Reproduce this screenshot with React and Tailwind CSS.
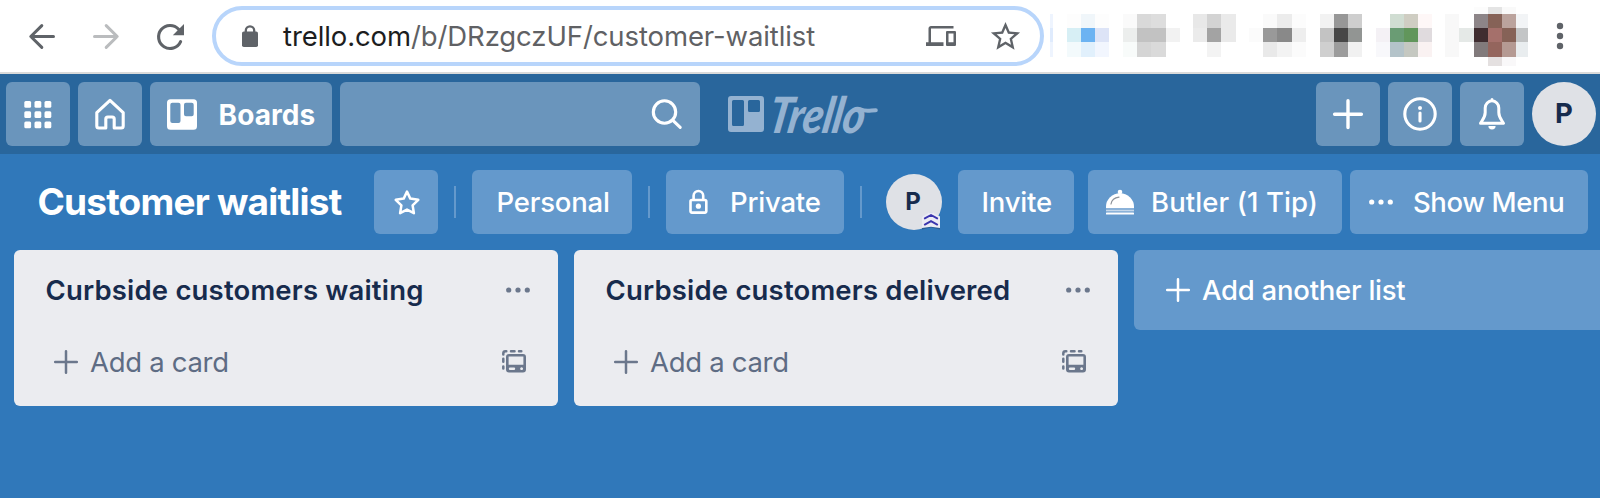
import { MdDevices, MdStarBorder } from 'react-icons/md';

const CELL = 14.2;

/* Rows of colour blocks for the obscured browser extensions. */
const MOSAICS = [
  { x: 1066.5, y: 14, rows: [['#fdfdfd', '#f0f6fa', '#fdfdfd'], ['#d7eff5', '#6cb3f2', '#dde4f7'], ['#f3fafc', '#e1f0fc', '#f2f6fe']] },
  { x: 1123, y: 14, rows: [['#fafafa', '#d9d9d9', '#dddddd', null], ['#eceeed', '#c2c2c2', '#c2c2c2', '#f2f2f2'], ['#f8fbfa', '#d5d5d5', '#dadada', null]] },
  { x: 1193, y: 14, rows: [['#e8e8e8', '#d3d3d3', '#eaeaea'], ['#ebebeb', '#a3a3a3', '#eaeaea'], [null, '#f3f3f3', null]] },
  { x: 1249, y: 14, rows: [[null, '#fafafa', '#ececec', '#fcfcfc'], ['#fbfbfb', '#999999', '#898989', '#eeeeee'], [null, '#e9e9e9', '#f3f3f3', '#fbfbfb']] },
  { x: 1319.5, y: 14, rows: [['#f2f2f2', '#979797', '#cecece'], ['#c3c3c3', '#474747', '#929593'], ['#cfcfcf', '#9c9c9c', '#f1f1f1']] },
  { x: 1375.5, y: 14, rows: [[null, '#d0ddd2', '#cfcdc2', '#fef7f7'], ['#f4f1f5', '#6a9c74', '#61965b', '#e0dbde'], ['#f8f8fb', '#b4c3c9', '#c5c8c1', '#faf2f2']] },
  {
    x: 1445.2,
    y: 14,
    rows: [
      ['#f8f8f8', null, '#8d8588', '#866257', '#bba39d', '#f2f4f6'],
      ['#f8f8f8', '#e5e9e7', '#3f2d30', '#a5706b', '#866257', '#c3c5c6'],
      ['#f8f8f8', null, '#817a7b', '#94655d', '#b59a93', '#e9edef'],
    ],
  },
];

function Extensions() {
  return (
    <svg className="block shrink-0" width="480" height="60" viewBox="1048 6 480 60" shapeRendering="crispEdges">
      <rect x="1050" y="14" width="2.5" height="43" fill="#eef4fe" />
      <rect x="1050" y="28" width="2.5" height="14" fill="#dfebfd" />
      {MOSAICS.map((m) =>
        m.rows.map((row, r) =>
          row.map((c, i) =>
            c ? <rect key={`${m.x}-${r}-${i}`} x={m.x + i * CELL} y={m.y + r * CELL} width={CELL} height={CELL} fill={c} /> : null
          )
        )
      )}
      <rect x="1487.5" y="7" width="14.5" height="7" fill="#e4e4e4" />
      <rect x="1473.5" y="7" width="14" height="7" fill="#fcfcfc" />
      <rect x="1502" y="7" width="14" height="7" fill="#f9f9f9" />
      <rect x="1487.5" y="57" width="14.5" height="9" fill="#e4e0e0" />
      <rect x="1502" y="57" width="14" height="9" fill="#f9f8f9" />
    </svg>
  );
}

function Glyph({ box, children, className = '', w = 2 }) {
  const [, , width, height] = box.split(' ');
  return (
    <svg
      className={`block shrink-0 ${className}`}
      width={width}
      height={height}
      viewBox={box}
      fill="none"
      stroke="currentColor"
      strokeWidth={w}
      strokeLinecap="round"
      strokeLinejoin="round"
    >
      {children}
    </svg>
  );
}

function Dots({ className = '', gap = 9.3 }) {
  return (
    <Glyph box="0 0 28 8" className={className}>
      <g fill="currentColor" stroke="none">
        <circle cx={14 - gap} cy="4" r="2.6" />
        <circle cx="14" cy="4" r="2.6" />
        <circle cx={14 + gap} cy="4" r="2.6" />
      </g>
    </Glyph>
  );
}

function Plus({ className = '' }) {
  return (
    <Glyph box="0 0 26 26" w={2.5} className={className}>
      <path d="M13 2.2V23.8M2.2 13H23.8" />
    </Glyph>
  );
}

function BrowserBar() {
  return (
    <div className="flex h-[74px] items-start border-b-2 border-[#dadada] bg-white pt-1.5 text-[#5f6368]">
      <div className="flex h-[60px] w-[212px] shrink-0 items-center">
        <Glyph box="28 20 29 31" w={3} className="ml-7">
          <path d="M53.5 35.5H31M41.8 24.6L30.8 35.5L41.8 46.4" />
        </Glyph>
        <Glyph box="92 20 29 31" w={3} className="ml-[35px] text-[#babcbe]">
          <path d="M94.5 35.5H117M106.2 24.6L117.2 35.5L106.2 46.4" />
        </Glyph>
        <Glyph box="155 20 31 31" w={3.1} className="ml-[34px]">
          <path d="M178.6 28.2A11.5 11.5 0 1 0 180.6 40.6" />
          <path d="M184 23V34.2H172.8Z" fill="currentColor" stroke="none" />
        </Glyph>
      </div>
      <div className="flex h-[60px] w-[832px] shrink-0 items-center rounded-full border-4 border-[#b8d5fb]">
        <Glyph box="240 24 20 25" w={2.3} className="ml-6">
          <rect x="242" y="31.5" width="16" height="15.5" rx="1.8" fill="currentColor" stroke="none" />
          <path d="M245.8 32V30.6a4.2 4.2 0 0 1 8.4 0V32" />
        </Glyph>
        <div className="ml-[23px] w-[639px] whitespace-nowrap pt-0.5 text-[27.5px] tracking-[-0.1px] text-[#606164]">
          <span className="text-[#1c1d20]">trello.com</span>/b/DRzgczUF/customer-waitlist
        </div>
        <MdDevices className="ml-1 size-[30px] shrink-0" />
        <MdStarBorder className="ml-8 size-[35px] shrink-0" />
      </div>
      <div className="ml-1">
        <Extensions />
      </div>
      <Glyph box="1554 6 12 60" className="ml-[26px]">
        <g fill="currentColor" stroke="none">
          <circle cx="1560" cy="26" r="3.2" />
          <circle cx="1560" cy="36" r="3.2" />
          <circle cx="1560" cy="46" r="3.2" />
        </g>
      </Glyph>
    </div>
  );
}

const headBtn = 'flex h-16 shrink-0 items-center rounded-md bg-[#6a95bc]';

function TrelloHeader() {
  return (
    <header className="flex h-20 items-center gap-2 bg-[#29669c] pl-1.5 pr-1 text-white">
      <button className={`${headBtn} w-16 justify-center`}>
        <Glyph box="22.5 98 32 32">
          <g fill="currentColor" stroke="none">
            {[101, 111.2, 121.4].map((y) =>
              [24.8, 35, 45].map((x) => <rect key={`${x}-${y}`} x={x} y={y} width="6.8" height="6.8" rx="1.5" />)
            )}
          </g>
        </Glyph>
      </button>
      <button className={`${headBtn} w-16 justify-center`}>
        <Glyph box="93 97 34 34" w={3.1}>
          <path d="M110 100.4L96.8 112.6V126q0 2 2 2H105.8V119a2 2 0 0 1 2-2h4.4a2 2 0 0 1 2 2V128H121.2q2 0 2-2V112.6Z" />
        </Glyph>
      </button>
      <button className={`${headBtn} w-[182px] pl-4`}>
        <Glyph box="166 98 32 32">
          <path
            fill="currentColor"
            stroke="none"
            fillRule="evenodd"
            d="M170.5 99.2h23a3.5 3.5 0 0 1 3.5 3.5v23.6a3.5 3.5 0 0 1-3.5 3.5h-23a3.5 3.5 0 0 1-3.5-3.5v-23.6a3.5 3.5 0 0 1 3.5-3.5zM172.3 102.8a2 2 0 0 0-2 2v16.2a2 2 0 0 0 2 2h6.2a2 2 0 0 0 2-2v-16.2a2 2 0 0 0-2-2zM186 102.8a2 2 0 0 0-2 2v9.4a2 2 0 0 0 2 2h5.7a2 2 0 0 0 2-2v-9.4a2 2 0 0 0-2-2z"
          />
        </Glyph>
        <span className="ml-[20.5px] pt-px text-[28px] font-bold tracking-[0.1px]">Boards</span>
      </button>
      <div className={`${headBtn} w-[360px] justify-end pr-4`}>
        <Glyph box="650 97 34 34" w={3.1}>
          <circle cx="664.5" cy="112" r="11.2" />
          <path d="M672.6 120.2L680.2 127.4" />
        </Glyph>
      </div>
      <div className="ml-5 flex h-20 items-center text-[#94b2d1]">
        <svg className="block shrink-0" width="36" height="36" viewBox="0 0 36 36">
          <path
            fill="currentColor"
            fillRule="evenodd"
            d="M3 0h30a3 3 0 0 1 3 3v30a3 3 0 0 1-3 3H3a3 3 0 0 1-3-3V3a3 3 0 0 1 3-3zM5.500 4A1.500 1.500 0 0 0 4 5.500v23A1.500 1.500 0 0 0 5.500 30h9a1.500 1.500 0 0 0 1.500-1.500v-23A1.500 1.500 0 0 0 14.500 4zM21.500 4A1.500 1.500 0 0 0 20 5.500v9a1.500 1.500 0 0 0 1.500 1.500h9a1.500 1.500 0 0 0 1.500-1.500v-9A1.500 1.500 0 0 0 30.500 4z"
          />
        </svg>
        <div className="relative ml-1.5">
          <span className="inline-block origin-left -skew-x-12 scale-x-[0.84] font-['Lato',sans-serif] text-[50px] font-black italic leading-none tracking-[-0.5px]">
            Trello
          </span>
          <svg className="absolute left-[90px] top-[18px]" width="18" height="10" viewBox="0 0 18 10">
            <path d="M1 2.500C6 5 11 3.200 15.800 3.200" fill="none" stroke="currentColor" strokeWidth="4" strokeLinecap="round" />
          </svg>
        </div>
      </div>
      <div className="ml-auto flex gap-2">
        <button className={`${headBtn} w-16 justify-center`}>
          <Glyph box="1331 97 34 34" w={3.4}>
            <path d="M1348 100.8V127.6M1334.6 114.2H1361.4" />
          </Glyph>
        </button>
        <button className={`${headBtn} w-16 justify-center`}>
          <Glyph box="1402 96 36 36" w={3.1}>
            <circle cx="1420" cy="114" r="15.2" />
            <circle cx="1420" cy="108" r="2" fill="currentColor" stroke="none" />
            <path d="M1420 113V121" />
          </Glyph>
        </button>
        <button className={`${headBtn} w-16 justify-center`}>
          <Glyph box="1476 96 32 36" w={3}>
            <path d="M1480.5 123.2C1483.3 118.8 1485.2 117 1485.2 112.5V108a6.8 7.2 0 0 1 13.6 0V112.5C1498.8 117 1500.7 118.8 1503.5 123.2ZM1492 99.5V100.5" />
            <path d="M1488.4 126H1495.6A3.6 3.4 0 0 1 1488.4 126Z" fill="currentColor" stroke="none" />
          </Glyph>
        </button>
        <div className="flex size-16 items-center justify-center rounded-full bg-[#dfe1e6] text-[27.5px] font-bold text-[#172b4d]">P</div>
      </div>
    </header>
  );
}

const boardBtn = 'flex h-16 shrink-0 items-center whitespace-nowrap rounded-md bg-[#6499cc] text-[27.5px] font-medium tracking-[-0.2px]';

function Divider() {
  return <div className="mx-4 h-8 w-0.5 shrink-0 bg-[#6499cc]" />;
}

function BoardBar() {
  return (
    <div className="flex h-24 items-center text-white">
      <h1 className="w-[374px] shrink-0 pb-0.5 pl-[37.5px] text-[37px] font-bold leading-none tracking-[-0.8px]">Customer waitlist</h1>
      <button className={`${boardBtn} w-16 justify-center`}>
        <Glyph box="0 0 28 28" w={2.5} className="ml-px mt-px">
          <path d="M14 2.6L17.3 9.6L25.3 10.8L19.6 16.3L20.9 24.2L14 20.6L7.1 24.2L8.4 16.3L2.7 10.8L10.7 9.6Z" />
        </Glyph>
      </button>
      <Divider />
      <button className={`${boardBtn} w-40 pl-[24.5px] pt-px`}>Personal</button>
      <Divider />
      <button className={`${boardBtn} w-[178px] pl-[22px]`}>
        <Glyph box="688 188 21 28" w={2.6}>
          <rect x="690.5" y="200" width="15.8" height="12.6" rx="1.5" />
          <path d="M693.6 199.5V195.8a4.8 4.8 0 0 1 9.6 0V199.5" />
          <circle cx="698.4" cy="206.2" r="2.6" fill="currentColor" stroke="none" />
        </Glyph>
        <span className="ml-[21px] pt-px">Private</span>
      </button>
      <Divider />
      <div className="relative ml-2 flex size-14 shrink-0 items-center justify-center rounded-full bg-[#dfe1e6] pr-0.5 text-[24px] font-bold text-[#172b4d]">
        P
        <svg className="absolute bottom-0 right-0.5" width="18" height="18" viewBox="0 0 18 18">
          <path d="M0 5L9 0L18 5V17.5L9 15.500L0 17.500Z" fill="#2a5d92" />
          <path d="M0 4.500L7 0.500Q9 -0.500 11 0.500L18 4.500V16L9 14.800L0 16Z" fill="#ebebf4" />
          <path d="M2.800 6.400L9 3L15.200 6.400M2.800 12.600L9 9.200L15.200 12.600" fill="none" stroke="#3a35ae" strokeWidth="1.900" strokeLinecap="round" />
        </svg>
      </div>
      <button className={`${boardBtn} ml-4 w-[116px] pl-[23.5px] pt-px`}>Invite</button>
      <button className={`${boardBtn} ml-3.5 w-[254px] pl-[17px]`}>
        <svg className="block shrink-0" width="30" height="28" viewBox="1105 188 30 28">
          <circle cx="1120" cy="192" r="2.3" fill="#fff" />
          <path d="M1106 208.3V206.5a14 13.2 0 0 1 28 0V208.3Z" fill="#fff" />
          <path d="M1111 204C1111.6 200.5 1114.5 197.8 1119 197.2" fill="none" stroke="#8d9299" strokeWidth="1.2" strokeLinecap="round" />
          <rect x="1106" y="209.6" width="28" height="1.8" fill="#c5d8eb" />
          <rect x="1106" y="212.4" width="28" height="2.1" rx="0.6" fill="#fff" />
        </svg>
        <span className="ml-4 pt-px tracking-[0.1px]">Butler (1 Tip)</span>
      </button>
      <button className={`${boardBtn} ml-2 w-[238px] pl-[17px]`}>
        <Dots />
        <span className="ml-[18px] pt-px tracking-[-0.4px]">Show Menu</span>
      </button>
    </div>
  );
}

function List({ title }) {
  return (
    <section className="h-[156px] w-[544px] shrink-0 rounded-md bg-[#ebecf0] text-[27.5px]">
      <div className="flex h-20 items-center pl-[31.5px] pr-[26px]">
        <h2 className="whitespace-nowrap pt-px font-semibold tracking-[0.18px] text-[#172b4d]">{title}</h2>
        <Dots className="ml-auto text-[#6b778c]" />
      </div>
      <div className="flex h-16 items-center pl-[39px] pr-[31px]">
        <Plus className="text-[#6b778c]" />
        <span className="ml-[11px] pt-px tracking-[-0.3px] text-[#5e6c84]">Add a card</span>
        <svg className="ml-auto block text-[#6b778c]" width="26" height="26" viewBox="501 349 26 26">
          <path
            d="M503.3 366.5V368.5M503.3 358.8V361.8M503.3 354.5V353.5Q503.3 351.3 505.5 351.3H506.3M511 351.3H514.5M519 351.3H521.3"
            fill="none"
            stroke="currentColor"
            strokeWidth="2.5"
            strokeLinecap="round"
          />
          <path
            fill="currentColor"
            fillRule="evenodd"
            d="M509 354h14a3 3 0 0 1 3 3v12.6a3 3 0 0 1-3 3h-14a3 3 0 0 1-3-3V357a3 3 0 0 1 3-3zM508.6 356.5v8.3h14.8v-8.3zM510 367.500a1.200 1.200 0 0 0 0 2.400h4a1.200 1.200 0 0 0 0-2.400zM521.600 367.300a1.400 1.400 0 1 0 0.010 0z"
          />
        </svg>
      </div>
    </section>
  );
}

export default function App() {
  return (
    <div className="h-[498px] w-[1600px] overflow-hidden bg-[#3078ba] font-['Inter',sans-serif]">
      <BrowserBar />
      <TrelloHeader />
      <BoardBar />
      <main className="flex items-start gap-4 pl-3.5">
        <List title="Curbside customers waiting" />
        <List title="Curbside customers delivered" />
        <button className="flex h-20 w-[544px] shrink-0 items-center rounded-md bg-[#6499cc] pl-[31px] text-[27.5px] font-medium tracking-[-0.25px] text-white">
          <Plus />
          <span className="ml-[11px] pt-px">Add another list</span>
        </button>
      </main>
    </div>
  );
}
